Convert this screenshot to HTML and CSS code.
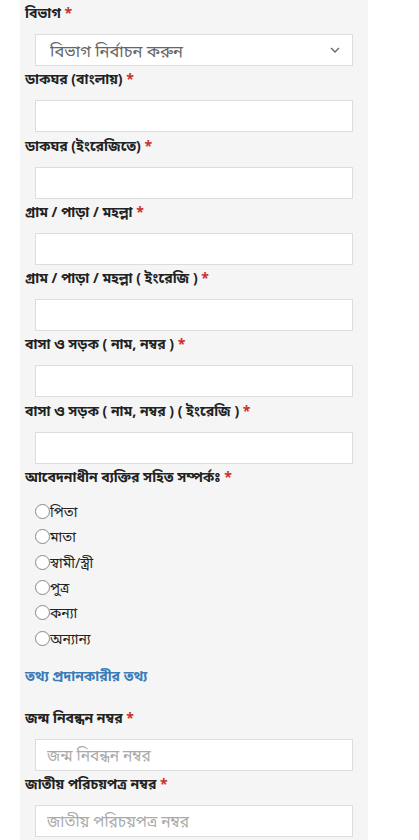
FILE: index.html
```html
<!DOCTYPE html>
<html lang="bn">
<head>
    <meta charset="UTF-8">
    <meta name="viewport" content="width=device-width, initial-scale=1.0">
    <title>আবেদন ফরম</title>
    <link rel="stylesheet" href="styles.css">
</head>
<body>

    <div class="form-panel">
        <!-- ঠিকানা -->
        <div class="form-field">
            <label class="field-label">বিভাগ <span class="req">*</span></label>
            <div class="select-wrap">
                <select class="field-input field-select">
                    <option>বিভাগ নির্বাচন করুন</option>
                </select>
                <svg class="select-arrow" width="10" height="6" viewBox="0 0 10 6"><path d="M1 1l4 4 4-4" fill="none" stroke="#666" stroke-width="1.3"/></svg>
            </div>
        </div>

        <div class="form-field">
            <label class="field-label">ডাকঘর (বাংলায়) <span class="req">*</span></label>
            <input class="field-input" type="text">
        </div>

        <div class="form-field">
            <label class="field-label">ডাকঘর (ইংরেজিতে) <span class="req">*</span></label>
            <input class="field-input" type="text">
        </div>

        <div class="form-field">
            <label class="field-label">গ্রাম / পাড়া / মহল্লা <span class="req">*</span></label>
            <input class="field-input" type="text">
        </div>

        <div class="form-field">
            <label class="field-label">গ্রাম / পাড়া / মহল্লা ( ইংরেজি ) <span class="req">*</span></label>
            <input class="field-input" type="text">
        </div>

        <div class="form-field">
            <label class="field-label">বাসা ও সড়ক ( নাম, নম্বর ) <span class="req">*</span></label>
            <input class="field-input" type="text">
        </div>

        <div class="form-field">
            <label class="field-label">বাসা ও সড়ক ( নাম, নম্বর ) ( ইংরেজি ) <span class="req">*</span></label>
            <input class="field-input" type="text">
        </div>

        <!-- সম্পর্ক -->
        <div class="form-field">
            <label class="field-label">আবেদনাধীন ব্যক্তির সহিত সম্পর্কঃ <span class="req">*</span></label>
            <div class="radio-list">
                <label class="radio-row"><span class="radio-dot"></span>পিতা</label>
                <label class="radio-row"><span class="radio-dot"></span>মাতা</label>
                <label class="radio-row"><span class="radio-dot"></span>স্বামী/স্ত্রী</label>
                <label class="radio-row"><span class="radio-dot"></span>পুত্র</label>
                <label class="radio-row"><span class="radio-dot"></span>কন্যা</label>
                <label class="radio-row"><span class="radio-dot"></span>অন্যান্য</label>
            </div>
        </div>

        <h4 class="section-title">তথ্য প্রদানকারীর তথ্য</h4>

        <div class="form-field">
            <label class="field-label">জন্ম নিবন্ধন নম্বর <span class="req">*</span></label>
            <input class="field-input" type="text" placeholder="জন্ম নিবন্ধন নম্বর">
        </div>

        <div class="form-field">
            <label class="field-label">জাতীয় পরিচয়পত্র নম্বর <span class="req">*</span></label>
            <input class="field-input" type="text" placeholder="জাতীয় পরিচয়পত্র নম্বর">
        </div>

        <div class="form-field">
            <label class="field-label">মোবাইল নম্বর <span class="req">*</span></label>
            <input class="field-input" type="text" placeholder="মোবাইল নম্বর">
        </div>
    </div>

</body>
</html>
```

FILE: styles.css
```css
/* Basic styling */
body {
    margin: 0;
    background: #fff;
    font-family: "Noto Sans", "Noto Sans Bengali", sans-serif;
    color: #222;
}

.form-panel {
    width: 343px;
    margin-left: 20px;
    padding: 3px 0 0 5px;
    background: #f5f5f5;
}

.form-field {
    margin-bottom: 3.3px;
}

.field-label {
    display: block;
    font-size: 14px;
    font-weight: bold;
    line-height: 20px;
    margin-bottom: 11px;
}

.req {
    color: #c9302c;
}

.field-input {
    display: block;
    box-sizing: border-box;
    width: 318px;
    height: 32px;
    margin-left: 10px;
    padding: 0 11px;
    border: 1px solid #ddd;
    background: #fff;
    font-family: inherit;
    font-size: 15.5px;
    color: #555;
    outline: none;
}

.field-input::placeholder {
    color: #aaa;
}

/* Select box */
.select-wrap {
    position: relative;
}

.field-select {
    appearance: none;
    -webkit-appearance: none;
    padding-left: 14px;
    font-size: 16.5px;
    color: #666;
    border-radius: 0;
}

.select-arrow {
    position: absolute;
    top: 13px;
    left: 305px;
}

/* Radio options */
.radio-list {
    padding: 4px 0 1px 10px;
}

.radio-row {
    display: flex;
    align-items: flex-start;
    height: 25.3px;
    font-size: 14px;
}

.radio-dot {
    width: 13px;
    height: 13px;
    margin-top: 2px;
    border: 1px solid #888;
    border-radius: 50%;
    background: #fff;
}

.section-title {
    margin: 0;
    padding: 8px 0 22px;
    font-size: 14px;
    line-height: 20px;
    color: #3a7bb8;
}
```
